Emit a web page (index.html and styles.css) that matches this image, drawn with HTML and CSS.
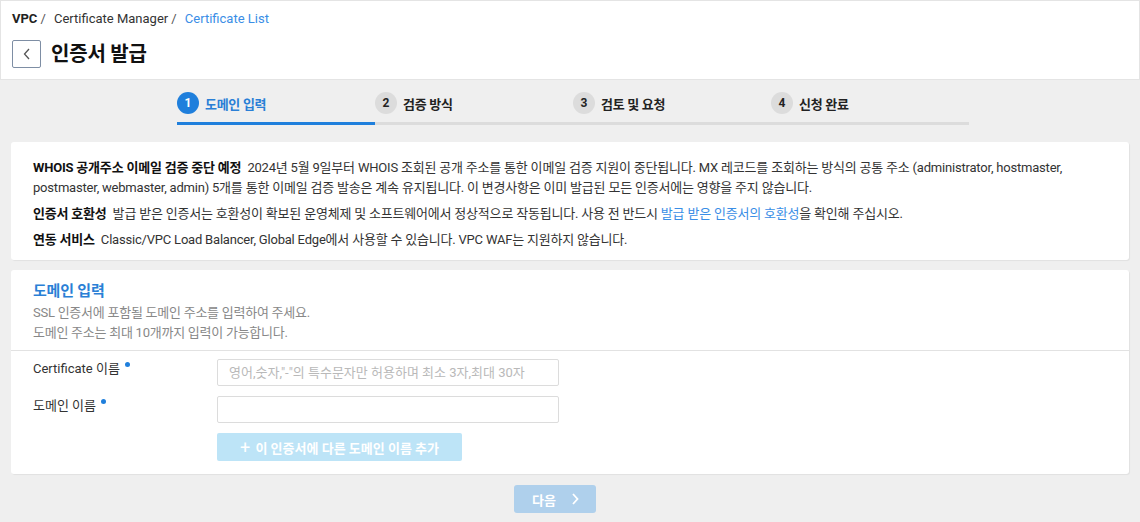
FILE: index.html
```html
<!DOCTYPE html>
<html lang="ko">
<head>
<meta charset="utf-8">
<link rel="stylesheet" href="styles.css">
</head>
<body>
<header class="page-head">
  <nav class="crumbs">
    <span class="crumb-root">VPC</span><span class="sep">/</span>
    <span class="crumb">Certificate Manager</span><span class="sep">/</span>
    <span class="crumb-cur">Certificate List</span>
  </nav>
  <div class="title-row">
    <button class="back"><svg width="10" height="14" viewBox="0 0 10 14"><path d="M7 2 L2.5 7 L7 12" fill="none" stroke="#555" stroke-width="1.3"/></svg></button>
    <h1>인증서 발급</h1>
  </div>
</header>
<main class="main">
  <ol class="steps">
    <li class="step active"><span class="num">1</span><span class="lbl">도메인 입력</span></li>
    <li class="step"><span class="num">2</span><span class="lbl">검증 방식</span></li>
    <li class="step"><span class="num">3</span><span class="lbl">검토 및 요청</span></li>
    <li class="step"><span class="num">4</span><span class="lbl">신청 완료</span></li>
  </ol>
  <section class="card info">
    <p><b>WHOIS 공개주소 이메일 검증 중단 예정</b> 2024년 5월 9일부터 WHOIS 조회된 공개 주소를 통한 이메일 검증 지원이 중단됩니다. MX 레코드를 조회하는 방식의 공통 주소 (administrator, hostmaster, postmaster, webmaster, admin) 5개를 통한 이메일 검증 발송은 계속 유지됩니다. 이 변경사항은 이미 발급된 모든 인증서에는 영향을 주지 않습니다.</p>
    <p><b>인증서 호환성</b> 발급 받은 인증서는 호환성이 확보된 운영체제 및 소프트웨어에서 정상적으로 작동됩니다. 사용 전 반드시 <a class="link">발급 받은 인증서의 호환성</a>을 확인해 주십시오.</p>
    <p><b>연동 서비스</b> Classic/VPC Load Balancer, Global Edge에서 사용할 수 있습니다. VPC WAF는 지원하지 않습니다.</p>
  </section>
  <section class="card form">
    <div class="form-head">
      <h2>도메인 입력</h2>
      <p>SSL 인증서에 포함될 도메인 주소를 입력하여 주세요.</p>
      <p>도메인 주소는 최대 10개까지 입력이 가능합니다.</p>
    </div>
    <div class="form-body">
      <div class="row">
        <label>Certificate 이름<i class="req"></i></label>
        <input class="inp" placeholder="영어,숫자,&quot;-&quot;의 특수문자만 허용하며 최소 3자,최대 30자">
      </div>
      <div class="row">
        <label>도메인 이름<i class="req"></i></label>
        <input class="inp">
      </div>
      <div class="row">
        <span class="spacer"></span>
        <button class="add"><span class="plus">+</span> 이 인증서에 다른 도메인 이름 추가</button>
      </div>
    </div>
  </section>
  <div class="foot">
    <button class="next">다음 <svg width="10" height="14" viewBox="0 0 10 14"><path d="M3 2 L7.5 7 L3 12" fill="none" stroke="#fff" stroke-width="1.8"/></svg></button>
  </div>
</main>
</body>
</html>
```
FILE: styles.css
```css
* { box-sizing: border-box; }
html, body { margin: 0; padding: 0; }
body {
  background: #efefef;
  font-family: Roboto, "Noto Sans CJK KR", sans-serif;
  font-size: 13px;
  color: #222;
  width: 1140px;
  height: 522px;
  overflow: hidden;
}
.page-head {
  background: #fff;
  border: 1px solid #e4e4e4;
  height: 80px;
  padding: 10px 11px 0;
}
.crumbs { font-size: 13px; line-height: 16px; color: #333; }
.crumb-root { font-weight: 700; color: #222; }
.sep { margin: 0 5px 0 3px; color: #555; }
.crumb-cur { color: #3a8ee6; }
.title-row { display: flex; align-items: center; margin-top: 13px; gap: 10px; }
.back {
  width: 29px; height: 28px; border: 1px solid #7e8ea4; border-radius: 2px;
  background: #fff; padding: 0; display: flex; align-items: center; justify-content: center;
}
.title-row h1 { margin: 0; font-size: 20px; font-weight: 700; color: #111; line-height: 28px; letter-spacing: -0.2px; }

.main { padding: 0 11px; }
.steps {
  list-style: none; margin: 12px 0 0 166px; padding: 0;
  display: flex; width: 792px;
}
.step {
  flex: 1; display: flex; align-items: center; gap: 6px;
  height: 33px; padding-bottom: 8px;
  border-bottom: 3px solid #dcdcdc;
  font-weight: 700; font-size: 13px; color: #222; letter-spacing: -0.3px;
}
.step .num {
  width: 22px; height: 22px; border-radius: 50%; background: #dcdcdc;
  display: flex; align-items: center; justify-content: center;
  font-size: 12px; font-weight: 700; color: #222; letter-spacing: 0;
}
.step.active { border-bottom-color: #1f7fdc; }
.step.active .num { background: #1f7fdc; color: #fff; }
.step.active .lbl { color: #2a7fd6; }

.card {
  background: #fff; border-radius: 3px;
  box-shadow: 1px 1px 1px rgba(0,0,0,0.06);
}
.info { margin-top: 17px; padding: 16px 22px 10px; letter-spacing: -0.2px; }
.info p { margin: 0 0 6px; line-height: 20px; color: #333; }
.info p:last-child { margin-bottom: 0; }
.info b { font-weight: 700; color: #111; margin-right: 3px; }
.link { color: #3a8ee6; }

.form { margin-top: 10px; }
.form-head { padding: 10px 22px 7px; border-bottom: 1px solid #e2e2e2; }
.form-head h2 { margin: 0 0 1px; font-size: 15px; font-weight: 700; color: #2a7fd6; line-height: 22px; letter-spacing: -0.2px; }
.form-head p { margin: 0; color: #888; line-height: 20px; letter-spacing: -0.25px; }
.form-body { padding: 8px 22px 13px; }
.row { display: flex; align-items: flex-start; margin-bottom: 10px; }
.row:last-child { margin-bottom: 0; }
.row label, .spacer { width: 184px; flex: none; color: #333; line-height: 20px; }
.req {
  display: inline-block; width: 5px; height: 5px; border-radius: 50%;
  background: #1f7fdc; vertical-align: top; margin: 3px 0 0 5px;
}
.inp {
  width: 342px; height: 27px; border: 1px solid #dcdcdc; border-radius: 2px;
  padding: 0 11px; font-family: Roboto, "Noto Sans CJK KR", sans-serif; font-size: 13px;
}
.inp::placeholder { color: #b9b9b9; }
.add {
  width: 245px; height: 28px; border: none; border-radius: 2px;
  background: #bde4f7; color: #fff; font-weight: 700; font-size: 13px;
  font-family: Roboto, "Noto Sans CJK KR", sans-serif;
}
.plus { font-size: 18px; font-weight: 400; vertical-align: -1px; margin-right: 2px; }
.foot { display: flex; justify-content: center; padding: 11px 30px 0 0; }
.next {
  width: 82px; height: 28px; border: none; border-radius: 3px;
  background: #afd0ec; color: #fff; font-weight: 700; font-size: 13px;
  font-family: Roboto, "Noto Sans CJK KR", sans-serif;
  display: flex; align-items: center; justify-content: center; gap: 14px;
  padding-left: 8px;
}
```
